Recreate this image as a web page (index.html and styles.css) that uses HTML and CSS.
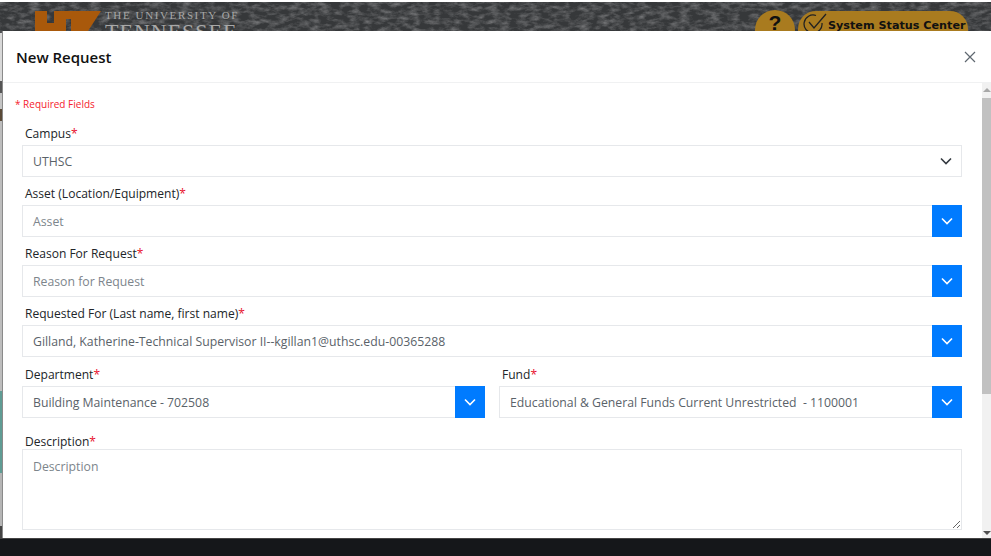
FILE: index.html
```html
<!DOCTYPE html>
<html lang="en">
<head>
<meta charset="utf-8">
<title>New Request</title>
<link rel="stylesheet" href="styles.css">
</head>
<body>
<div class="edge"></div>
<header class="topbar">
  <svg class="texture" width="991" height="31" aria-hidden="true">
    <filter id="grain"><feTurbulence type="fractalNoise" baseFrequency="0.1 0.22" numOctaves="4" seed="4"/><feColorMatrix values="0 0 0 0 0.36  0 0 0 0 0.36  0 0 0 0 0.37  1.1 0 0 0 -0.42"/></filter>
    <rect width="991" height="31" filter="url(#grain)"/>
  </svg>
  <div class="brand">
    <svg class="logo" width="66" height="20" viewBox="0 0 66 20"><path fill="#a9590b" d="M0 0H12V12H19V0H66L53 20H36V8H31V20H0Z"/></svg>
    <div class="brand-text"><div class="brand-small">THE UNIVERSITY OF</div><div class="brand-big">TENNESSEE</div></div>
  </div>
  <div class="top-actions">
    <div class="help">?</div>
    <div class="status">
      <svg class="status-icon" width="24" height="22" viewBox="0 0 24 22" fill="none" stroke="#222" stroke-width="1.3"><path d="M19 10a9 9 0 1 1-6-7.500"/><path d="M6 9l5 6L23 1"/></svg>
      <span>System Status Center</span>
    </div>
  </div>
</header>
<section class="modal">
  <div class="modal-head">
    <h1>New Request</h1>
    <svg class="close" width="12" height="12" viewBox="0 0 12 12" stroke="#5f6770" stroke-width="1.2"><path d="M1 1L11 11M11 1L1 11"/></svg>
  </div>
  <div class="modal-body">
    <div class="form">
      <p class="required">* Required Fields</p>
      <div class="field">
        <label>Campus<b>*</b></label>
        <div class="control">
          <div class="value">UTHSC</div>
          <svg class="chev-plain" width="12" height="8" viewBox="0 0 12 8" fill="none" stroke="#343a40" stroke-width="1.6"><path d="M1 1.500l5 5 5-5"/></svg>
        </div>
      </div>
      <div class="field">
        <label>Asset (Location/Equipment)<b>*</b></label>
        <div class="control">
          <div class="value ph">Asset</div>
          <div class="btn"><svg width="12" height="8" viewBox="0 0 12 8" fill="none" stroke="#fff" stroke-width="1.6"><path d="M1 1.500l5 5 5-5"/></svg></div>
        </div>
      </div>
      <div class="field">
        <label>Reason For Request<b>*</b></label>
        <div class="control">
          <div class="value ph">Reason for Request</div>
          <div class="btn"><svg width="12" height="8" viewBox="0 0 12 8" fill="none" stroke="#fff" stroke-width="1.6"><path d="M1 1.500l5 5 5-5"/></svg></div>
        </div>
      </div>
      <div class="field">
        <label>Requested For (Last name, first name)<b>*</b></label>
        <div class="control">
          <div class="value">Gilland, Katherine-Technical Supervisor II--kgillan1@uthsc.edu-00365288</div>
          <div class="btn"><svg width="12" height="8" viewBox="0 0 12 8" fill="none" stroke="#fff" stroke-width="1.6"><path d="M1 1.500l5 5 5-5"/></svg></div>
        </div>
      </div>
      <div class="row">
        <div class="field">
          <label>Department<b>*</b></label>
          <div class="control">
            <div class="value">Building Maintenance - 702508</div>
            <div class="btn"><svg width="12" height="8" viewBox="0 0 12 8" fill="none" stroke="#fff" stroke-width="1.6"><path d="M1 1.500l5 5 5-5"/></svg></div>
          </div>
        </div>
        <div class="field">
          <label>Fund<b>*</b></label>
          <div class="control">
            <div class="value">Educational &amp; General Funds Current Unrestricted &nbsp;- 1100001</div>
            <div class="btn"><svg width="12" height="8" viewBox="0 0 12 8" fill="none" stroke="#fff" stroke-width="1.6"><path d="M1 1.500l5 5 5-5"/></svg></div>
          </div>
        </div>
      </div>
      <div class="field f-desc">
        <label>Description<b>*</b></label>
        <textarea class="area" placeholder="Description"></textarea>
      </div>
    </div>
    <div class="scrollbar">
      <div class="arrow up"></div>
      <div class="thumb"></div>
      <div class="arrow down"></div>
    </div>
  </div>
</section>
<div class="footer"></div>
</body>
</html>
```
FILE: styles.css
```css
* { box-sizing: border-box; }
html, body { margin: 0; height: 100%; }
body {
  position: relative;
  width: 991px;
  height: 556px;
  overflow: hidden;
  background: #fff;
  font-family: "Open Sans", "Noto Sans", sans-serif;
  color: #212529;
}
.edge {
  position: absolute;
  left: 0; top: 31px; width: 2px; height: 507px;
  background: linear-gradient(#d8d8d8 0 50px, #555 50px 62px, #c4c4c4 62px 78px, #5a4a38 78px 90px, #bdbdbd 90px 360px, #5f9c94 360px 442px, #b5b5b5 442px 495px, #444 495px);
}
.topbar {
  position: relative;
  height: 31px;
  top: 2px;
  background: #36383a;
  display: flex;
  justify-content: space-between;
  overflow: hidden;
}
.texture { position: absolute; left: 0; top: 0; }
.brand { position: relative; display: flex; margin-left: 35px; padding-top: 9px; gap: 4px; }
.logo { flex: none; }
.brand-text { font-family: "Liberation Serif", serif; color: #a8a8a8; }
.brand-small { font-size: 11px; line-height: 11px; letter-spacing: 1.62px; margin-top: -1px; }
.brand-big { font-size: 22px; line-height: 21px; letter-spacing: 1px; }
.top-actions { position: relative; display: flex; gap: 3px; padding: 8px 23px 0 0; }
.help {
  width: 40px; height: 40px; border-radius: 20px; background: #a97b1f; color: #111;
  font: 700 21px/26px "Liberation Sans", sans-serif; text-align: center;
}
.status {
  width: 170px; height: 40px; margin-top: 1px; border-radius: 18px; background: #a97b1f;
  display: flex; gap: 1px; padding: 0 0 0 5px;
  font: 700 11.2px/20px "DejaVu Sans", sans-serif; color: #111;
  white-space: nowrap;
}
.status-icon { flex: none; margin-top: 2px; overflow: visible; }
.status span { margin-top: 5px; }
.modal {
  position: absolute;
  left: 2px; top: 31px; right: 0; bottom: 18px;
  background: #fff;
  display: flex;
  flex-direction: column;
  border-left: 1px solid #8a8a8a;
}
.modal-head {
  height: 52px;
  flex: none;
  border-bottom: 1px solid #f0f1f2;
  display: flex;
  align-items: center;
  justify-content: space-between;
  padding: 0 15px 0 13px;
}
h1 { margin: 0; font-size: 15px; font-weight: 600; color: #111; }
.close { margin-top: 1px; }
.modal-body { flex: 1; display: flex; min-height: 0; }
.form { flex: 1; min-width: 0; padding: 13px 20px 0 0; overflow: hidden; }
.required { margin: 0 0 13px 12px; font-size: 10px; line-height: 16px; color: #f5222d; }
.field { margin-left: 19px; margin-bottom: 8px; flex: 1; min-width: 0; }
label { display: block; font-size: 12.05px; line-height: 18px; padding-left: 3px; margin-bottom: 2px; color: #212529; }
label b { color: #e8112d; font-weight: 400; }
.control {
  height: 32px;
  display: flex;
  align-items: stretch;
  border: 1px solid #e6e8eb;
  background: #fff;
}
.value {
  flex: 1; min-width: 0;
  padding-left: 10px;
  font-size: 12.25px;
  line-height: 32px;
  color: #5a6269;
  white-space: nowrap;
  overflow: hidden;
}
.ph { color: #7d858c; }
.chev-plain { align-self: center; margin-right: 9px; }
.btn {
  width: 30px; flex: none;
  margin: -1px -1px -1px 0;
  background: #007bff;
  display: flex; align-items: center; justify-content: center;
}
.row { display: flex; gap: 14px; margin-top: 9px; }
.row .field { flex: 0 0 463px; }
.row .field + .field { margin-left: 0; }
.f-desc { margin-top: 8px; margin-bottom: 0; }
.f-desc label { margin-bottom: 0; line-height: 15px; }
.area {
  display: block;
  width: 100%;
  height: 81px;
  border: 1px solid #e6e8eb;
  padding: 7px 10px;
  font: 12.25px/20px "Open Sans", "Noto Sans", sans-serif;
  color: #5e666e;
  background: #fff;
  outline: none;
}
.area::placeholder { color: #7d858c; opacity: 1; }
.scrollbar {
  width: 9px; flex: none;
  background: #f1f1f1;
  display: flex; flex-direction: column; align-items: stretch;
  justify-content: space-between;
}
.arrow { height: 15px; position: relative; }
.arrow::after {
  content: ""; position: absolute; left: 1px;
  border-left: 4px solid transparent; border-right: 4px solid transparent;
}
.up::after { top: 5px; border-bottom: 4px solid #a8a8a8; }
.down::after { bottom: 3px; border-top: 4px solid #505050; }
.thumb { height: 296px; background: #c1c1c1; margin-bottom: auto; }
.footer {
  position: absolute; left: 0; right: 0; bottom: 0; height: 18px;
  background: #15171a;
  border-top: 1px solid #444;
}
```
